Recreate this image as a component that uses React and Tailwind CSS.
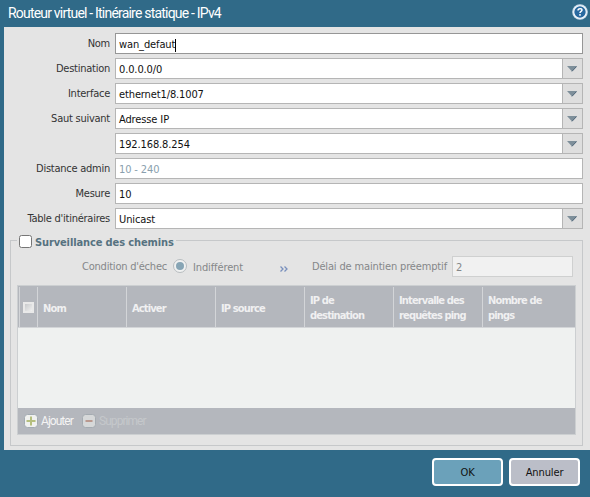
import React from "react";

function Arrow() {
  return (
    <div className="flex w-[20px] border-l border-[#b5b5b5] bg-[#dedede] pt-[7px] pl-[4px]">
      <svg width="10" height="6" viewBox="0 0 10 6" className="block">
        <path d="M0 0H10L5 5.6Z" fill="#7e8f9a" />
        <path d="M9.6 .5L5 5.3" stroke="#4d6478" strokeWidth="1" />
      </svg>
    </div>
  );
}

function Row({ label, children, arrow, focus }) {
  return (
    <div className="flex h-[21px]">
      <div className="w-[111px] pr-[5px] text-right leading-[22px] tracking-[-0.25px] whitespace-nowrap text-[#333]">{label}</div>
      <div className={"flex w-[468px] border bg-white " + (focus ? "border-[#969696]" : "border-[#b5b5b5]")}>
        <div className="flex flex-1 items-center pt-[3px] pl-[3px] whitespace-nowrap text-[#111]">{children}</div>
        {arrow && <Arrow />}
      </div>
    </div>
  );
}

function Head({ children, last }) {
  return (
    <div className={"flex items-center border-l border-[#d3d5d8] pt-[2px] pl-[5px] leading-[15px] font-bold tracking-[-0.85px] text-[#f0f0f1] " + (last ? "flex-1" : "w-[89px]")}>
      <div className="whitespace-nowrap">{children}</div>
    </div>
  );
}

export default function App() {
  return (
    <div className="h-[497px] w-[590px] overflow-hidden bg-[#306a88] pl-[4px] font-['DejaVu_Sans_Condensed','DejaVu_Sans',sans-serif] text-[11px] tracking-[-0.12px]">
      <div className="flex h-[27px] items-start justify-between pr-[2px] pl-[4px]">
        <div className="font-['Liberation_Sans_Narrow',Roboto,sans-serif] text-[14px] leading-[26px] tracking-[-0.8px] whitespace-nowrap text-white">Routeur virtuel - Itinéraire statique - IPv4</div>
        <svg width="16" height="16" viewBox="0 0 16 16" className="mt-[4px]">
          <circle cx="8" cy="8" r="7.8" fill="#cfe0ef" />
          <circle cx="8" cy="8" r="6.6" fill="#fff" />
          <circle cx="8" cy="8" r="5.7" fill="#2869a0" />
          <path d="M6 6.4C6 4.1 10 4.1 10 6.1C10 7.5 8 7.4 8 9.1" fill="none" stroke="#fff" strokeWidth="1.5" />
          <rect x="7.2" y="10.1" width="1.6" height="1.6" fill="#fff" />
        </svg>
      </div>
      <div className="h-[423px] bg-[#e4e4e4] pt-[6px]">
        <div className="flex flex-col gap-[4px]">
          <Row label="Nom" focus>wan_defaut<span className="h-[13px] w-px bg-black" /></Row>
          <Row label="Destination" arrow>0.0.0.0/0</Row>
          <Row label="Interface" arrow>ethernet1/8.1007</Row>
          <Row label="Saut suivant" arrow>Adresse IP</Row>
          <Row label="" arrow>192.168.8.254</Row>
          <Row label="Distance admin"><span className="text-[#8a9fae]">10 - 240</span></Row>
          <Row label="Mesure">10</Row>
          <Row label="Table d'itinéraires" arrow>Unicast</Row>
        </div>
        <div className="mt-[11px] ml-[6px] h-[206px] w-[573px] border border-[#c6c8ca] pl-[6px]">
          <div className="-mt-[7px] flex h-[15px] w-[159px] items-center bg-[#e4e4e4] pl-[2px]">
            <div className="h-[13px] w-[13px] shrink-0 rounded-[2.5px] border border-[#767676] bg-white" />
            <div className="ml-[3px] pt-[3px] text-[11px] font-bold whitespace-nowrap text-[#567280]">Surveillance des chemins</div>
          </div>
          <div className="mt-[7px] flex h-[21px] w-[556px] items-start leading-[20px] whitespace-nowrap text-[#858789]">
            <div className="w-[150px] pt-px text-right tracking-[-0.22px]">Condition d'échec</div>
            <div className="mt-[3px] ml-[6px] flex h-[14px] w-[14px] items-center justify-center rounded-full border border-[#b8bdc0] bg-[#f0f1f1]">
              <div className="h-[8px] w-[8px] rounded-full bg-[#87a5b5]" />
            </div>
            <div className="ml-[6px] w-[87px] pt-[2px]">Indifférent</div>
            <svg width="8" height="6" viewBox="0 0 8 6" className="mt-[10px]">
              <path d="M.5 .5L3 3L.5 5.5M4.5 .5L7 3L4.5 5.5" fill="none" stroke="#7990bd" strokeWidth="1.3" />
            </svg>
            <div className="w-[159px] pt-px text-right tracking-[-0.15px]">Délai de maintien préemptif</div>
            <div className="ml-[5px] h-[21px] w-[121px] shrink-0 border border-[#cfd0d0] bg-[#f1f1f1] pt-px pl-[3px]">2</div>
          </div>
          <div className="mt-[8px] flex h-[150px] w-[559px] flex-col border border-[#cccfd1] bg-[#eff1f0]">
            <div className="flex h-[42px] border-b border-[#d3d5d8] bg-[#b4b7bd] pt-px pl-px">
              <div className="flex w-[18px] items-center border-l border-[#d3d5d8] pl-[3px]">
                <div className="h-[11px] w-[11px] border-2 border-[#e9e9e9] bg-gradient-to-br from-[#c8cacc] to-[#f0f0f0]" />
              </div>
              <Head>Nom</Head>
              <Head>Activer</Head>
              <Head>IP source</Head>
              <Head>IP de<br />destination</Head>
              <Head>Intervalle des<br />requêtes ping</Head>
              <Head last>Nombre de<br />pings</Head>
            </div>
            <div className="flex-1" />
            <div className="flex h-[26px] items-center bg-[#b4b7bd] pl-[6px] font-['Liberation_Sans_Narrow',Roboto,sans-serif] text-[12px] tracking-[-0.95px]">
              <svg width="14" height="14" viewBox="0 0 14 14" className="shrink-0">
                <rect x=".5" y=".5" width="13" height="13" rx="3" fill="#f0f1ef" stroke="#a2abb2" />
                <path d="M7 2.5V11.5M2.5 7H11.5" stroke="#b5bf7e" strokeWidth="2" />
              </svg>
              <span className="ml-[3px] w-[41px] text-[#f4f4f4]">Ajouter</span>
              <svg width="14" height="14" viewBox="0 0 14 14" className="shrink-0">
                <rect x=".5" y=".5" width="13" height="13" rx="3" fill="#d6d8d9" stroke="#a4abb1" />
                <path d="M3.5 7H10.5" stroke="#ba998f" strokeWidth="2" />
              </svg>
              <span className="ml-[3px] text-[#c5c8cb]">Supprimer</span>
            </div>
          </div>
        </div>
      </div>
      <div className="flex gap-[6px] pt-[8px] pl-[428px] text-[#111]">
        <div className="flex h-[28px] w-[71px] items-center justify-center rounded-[4px] border-2 border-white bg-[#6ba1ba] pt-[3px]">OK</div>
        <div className="flex h-[28px] w-[71px] items-center justify-center rounded-[4px] border-2 border-white bg-[#bbbec8] pt-[3px]">Annuler</div>
      </div>
    </div>
  );
}
